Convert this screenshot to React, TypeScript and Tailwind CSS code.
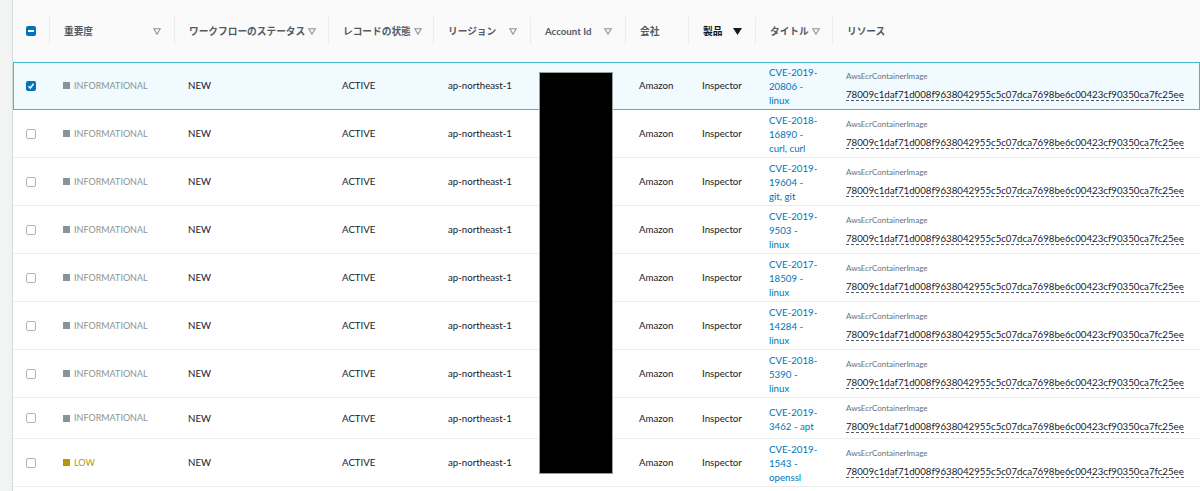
import React from 'react'

type Row = {
  severity: 'INFORMATIONAL' | 'LOW'
  title: string[]
  selected?: boolean
}

const HASH = '78009c1daf71d008f9638042955c5c07dca7698be6c00423cf90350ca7fc25ee'

const rows: Row[] = [
  { severity: 'INFORMATIONAL', title: ['CVE-2019-', '20806 -', 'linux'], selected: true },
  { severity: 'INFORMATIONAL', title: ['CVE-2018-', '16890 -', 'curl, curl'] },
  { severity: 'INFORMATIONAL', title: ['CVE-2019-', '19604 -', 'git, git'] },
  { severity: 'INFORMATIONAL', title: ['CVE-2019-', '9503 -', 'linux'] },
  { severity: 'INFORMATIONAL', title: ['CVE-2017-', '18509 -', 'linux'] },
  { severity: 'INFORMATIONAL', title: ['CVE-2019-', '14284 -', 'linux'] },
  { severity: 'INFORMATIONAL', title: ['CVE-2018-', '5390 -', 'linux'] },
  { severity: 'INFORMATIONAL', title: ['CVE-2019-', '3462 - apt'] },
  { severity: 'LOW', title: ['CVE-2019-', '1543 -', 'openssl'] },
]

const cols = [
  { key: 'sev', label: '重要度', w: 'w-[125px]', sort: 'outline' },
  { key: 'wf', label: 'ワークフローのステータス', w: 'w-[154px]', sort: 'outline' },
  { key: 'rec', label: 'レコードの状態', w: 'w-[105px]', sort: 'outline' },
  { key: 'reg', label: 'リージョン', w: 'w-[97px]', sort: 'outline' },
  { key: 'acct', label: 'Account Id', w: 'w-[95px]', sort: 'outline' },
  { key: 'co', label: '会社', w: 'w-[63px]', sort: '' },
  { key: 'prod', label: '製品', w: 'w-[67px]', sort: 'filled' },
  { key: 'title', label: 'タイトル', w: 'w-[77px]', sort: 'outline' },
  { key: 'res', label: 'リソース', w: 'flex-1', sort: '' },
]

function SortIcon({ kind }: { kind: string }) {
  if (kind === 'filled') {
    return (
      <svg width="9" height="7" viewBox="0 0 9 7" className="shrink-0">
        <polygon points="0,0 9,0 4.5,7" fill="#16191f" />
      </svg>
    )
  }
  return (
    <svg width="8" height="7" viewBox="0 0 8 7" className="shrink-0">
      <polygon points="0.8,0.8 7.2,0.8 4,6.2" fill="none" stroke="#879596" strokeWidth="1.1" />
    </svg>
  )
}

function Checkbox({ state }: { state: 'none' | 'checked' | 'mixed' }) {
  if (state === 'none') {
    return <span className="block w-[10px] h-[10px] rounded-[2px] border border-[#aab7b8] bg-white" />
  }
  return (
    <span className="flex items-center justify-center w-[10px] h-[10px] rounded-[2px] bg-[#0073bb]">
      {state === 'mixed' ? (
        <span className="block w-[6px] h-[2px] bg-white" />
      ) : (
        <svg width="8" height="8" viewBox="0 0 8 8">
          <polyline points="1.5,4.2 3.3,6 6.6,1.8" fill="none" stroke="white" strokeWidth="1.5" />
        </svg>
      )}
    </span>
  )
}

function DataRow({ row }: { row: Row }) {
  const sevColor = row.severity === 'LOW' ? 'text-[#b7950b]' : 'text-[#879596]'
  const sevBox = row.severity === 'LOW' ? 'bg-[#b7950b]' : 'bg-[#879596]'
  return (
    <div
      className={
        row.selected
          ? 'flex items-center border-b border-[#44b9d6] shadow-[inset_1px_1px_0_0_#44b9d6,inset_-1px_0_0_0_#44b9d6] bg-[#f1faff] text-[#16191f]'
          : 'flex items-center border-b border-[#eaeded] bg-white text-[#16191f]'
      }
    >
      <div className="w-[36px] flex justify-center shrink-0">
        <Checkbox state={row.selected ? 'checked' : 'none'} />
      </div>
      <div className={`w-[125px] shrink-0 pl-[14px] flex items-center gap-[4px] text-[9px] ${sevColor}`}>
        <span className={`block w-[7px] h-[7px] ${sevBox}`} />
        <span>{row.severity}</span>
      </div>
      <div className="w-[154px] shrink-0 pl-[14px]">NEW</div>
      <div className="w-[105px] shrink-0 pl-[14px]">ACTIVE</div>
      <div className="w-[97px] shrink-0 pl-[15px]">ap-northeast-1</div>
      <div className="w-[95px] shrink-0 pl-[13px]"></div>
      <div className="w-[63px] shrink-0 pl-[14px]">Amazon</div>
      <div className="w-[67px] shrink-0 pl-[14px]">Inspector</div>
      <div className="w-[77px] shrink-0 pl-[14px] pt-[3px] pb-[2px] leading-[14px] text-[#0073bb]">
        {row.title.map((t, i) => (
          <div key={i} className="whitespace-nowrap">{t}</div>
        ))}
      </div>
      <div className="flex-1 pl-[14px] pt-[4px] pb-[5px]">
        <div className="text-[8px] leading-[12px] text-[#687078]">AwsEcrContainerImage</div>
        <div className="mt-[5px] leading-[14px]">
          <span className="border-b border-dashed border-[#545b64] whitespace-nowrap">{HASH}</span>
        </div>
      </div>
    </div>
  )
}

export default function App() {
  return (
    <div
      className="relative flex w-[1200px] h-[491px] overflow-hidden bg-white text-[9.7px]"
      style={{ fontFamily: 'Lato, "Noto Sans CJK JP", sans-serif' }}
    >
      <div className="w-[13px] shrink-0 bg-[#f2f3f3] border-r border-[#d5dbdb]" />
      <div className="flex-1 flex flex-col">
        <div className="flex items-center h-[62px] bg-[#fafafa] font-bold text-[#545b64]">
          <div className="w-[36px] flex justify-center shrink-0">
            <Checkbox state="mixed" />
          </div>
          {cols.map((c) => (
            <div
              key={c.key}
              className={`${c.w} ${c.w === 'flex-1' ? '' : 'shrink-0'} h-[28px] flex items-center justify-between gap-[3px] pl-[14px] pr-[13px] border-l border-[#eaeded] whitespace-nowrap`}
            >
              <span className={c.key === 'prod' ? 'text-[#16191f]' : ''}>{c.label}</span>
              {c.sort && <SortIcon kind={c.sort} />}
            </div>
          ))}
        </div>
        {rows.map((r, i) => (
          <DataRow key={i} row={r} />
        ))}
      </div>
      <div className="absolute left-[539px] top-[72px] w-[74px] h-[402px] bg-black border border-[#9aa0a0]" />
    </div>
  )
}
